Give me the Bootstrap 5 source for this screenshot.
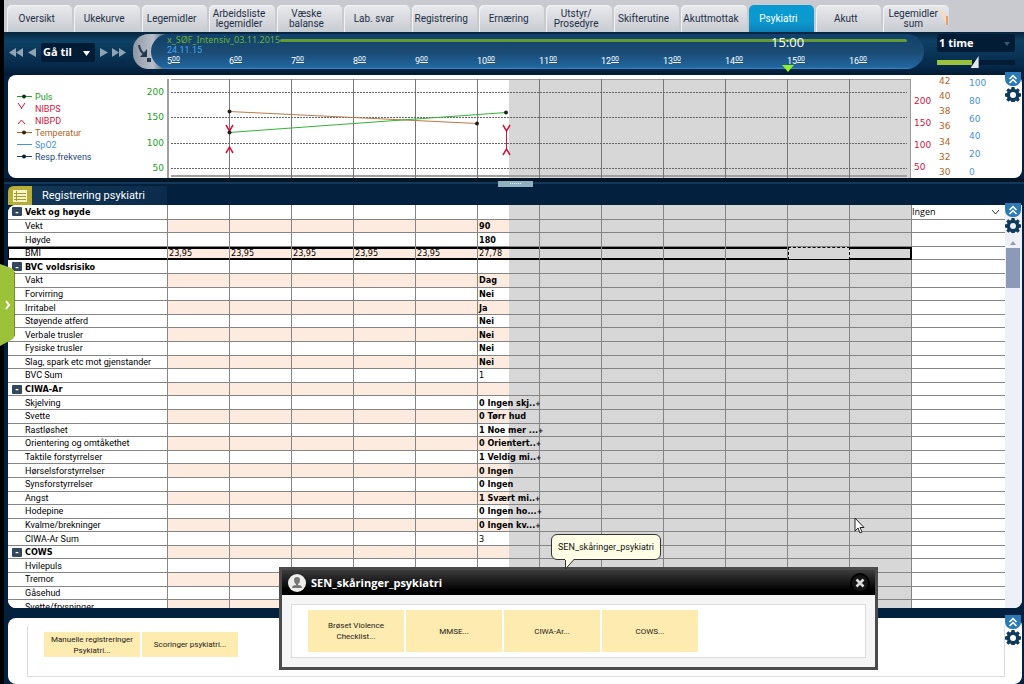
<!DOCTYPE html>
<html lang="no">
<head>
<meta charset="utf-8">
<meta name="viewport" content="width=device-width, initial-scale=1">
<title>Registrering psykiatri</title>
<link href="https://cdn.jsdelivr.net/npm/bootstrap@5.3.0/dist/css/bootstrap.min.css" rel="stylesheet">
<style>
:root{--ui:Roboto,"Open Sans",sans-serif;--head:"Open Sans",sans-serif;--data:"DejaVu Sans Condensed","DejaVu Sans",sans-serif;--line:#858585;--later:#d7d7d7;--peach:#feebdf}
body{font-family:var(--ui);font-size:9px;line-height:12px;color:#111;background:#03213f}
button,select{font-family:inherit}
.app{border-left:4px solid #000;min-height:570px;overflow:hidden}
.tabs{background:#c8cad0;height:32px;padding:5px 73px 0 3px}
.tabs .nav-link{flex:1 1 0;min-width:0;margin-right:2px;padding:0 7px 0 1px;border:0;border-radius:5px 5px 0 0;font:10px/10px var(--ui);color:#1d3047;background:linear-gradient(#e9eaed,#d5d7dc 60%,#c6ccd2);box-shadow:inset 1px 1px #f1f2f4;white-space:nowrap}
.tabs .nav-link.active{color:#fff;background:linear-gradient(#079ad0,#0c9ad0 60%,#0d7fb8);box-shadow:none}
.tabs .nav-link:last-child{position:relative;isolation:isolate}
.corner{position:absolute;right:0;top:2px;z-index:-1}
.toolbar-row{height:43px;background:linear-gradient(#07243c,#0d4163 20%,#06294a 80%,#021a33)}
.nav-tools{width:129px;padding-left:5px;padding-bottom:3px;gap:4px}
.arrow-btn{border:0;background:none;padding:0;line-height:0}
.dark-select{appearance:none;display:block;border:0;border-radius:2px;color:#fff;background:#031c36;font:700 11px/14px var(--head);padding:0 2px}
.dark-select.goto{width:54px;height:19px}
.pick{position:relative}
.pick svg{position:absolute;right:5px;top:8px;pointer-events:none}
.capsule{margin-top:2px;height:39px;position:relative}
.cap-body{height:35px;border-radius:16px 18px 18px 16px;background:linear-gradient(90deg,#8d97a5,#b9c0ca 20px,#0000 40px)}
.timeline{height:35px;margin-left:18px;padding-left:16px;padding-right:13px;border-radius:18px;background:linear-gradient(#11406a,#1b4a72 50%,#2166a0 95%,#3f8cc8);color:#fff}
.cap-icon{position:absolute;left:4px;top:11px}
.plan{color:#6ab42e;font:9px/12px "Noto Sans",sans-serif}
.plan-bar{height:3px;background:#649b33;border-radius:2px;margin-right:4px}
.date{color:#3fa4f4;line-height:9px}
.hours>span{flex:1 1 0;line-height:12px;white-space:nowrap}
.hours sup{font-size:7px;top:-3px;text-decoration:underline;line-height:0}
.clock{position:absolute;left:638px;top:0;font:13px/16px var(--head);color:#fff}
.clock-mark{position:absolute;left:649px;top:31px}
.zoombox{width:100px;padding:2px 9px 0 13px}
.zoombox .dark-select{width:100%;height:18px}
.zoombox input{appearance:none;display:block;width:100%;height:12px;margin:4px 0 0;background:linear-gradient(90deg,#9ac23c 45%,#031c36 45%) center/100% 5px no-repeat;border-radius:3px}
.zoombox input::-webkit-slider-thumb{appearance:none;width:8px;height:12px;background:#e3e8ee;clip-path:polygon(100% 0,100% 100%,0 100%)}
.panel{background:#fff;margin-left:4px;margin-right:2px;position:relative}
.chart{height:103px;border-radius:8px}
.side-tools{position:absolute;right:1px;top:-3px;width:16px;z-index:2}
.sheet-wrap .side-tools{right:3px;top:-2px}
.side-tools button{border:0;padding:0;background:none;display:block;line-height:0}
.side-tools .fold{background:#2b79b5;width:16px;height:14px;border-radius:0 0 7px 7px}
.left-col{width:159px;flex:none}
.legend-list{padding:16px 0 0 9px}
.legend-list svg{margin-right:3px;flex:none}
.axis{font-family:"DejaVu Sans",sans-serif}
.axis.green{padding:11px 3px 4px 0;color:#23a023;text-align:right}
.axis.red{padding:20px 0 5px 3px;width:28px;color:#d4143c}
.axis.brown{width:30px;color:#b4641e}
.axis.blue{color:#4a90e2;padding-top:2px}
.split{height:8px;background:linear-gradient(#041527 4px,#14385a 4px,#14385a 6px,#03213f 6px)}
.grip{width:35px;height:6px;background:#8fb0bf;margin-left:494px;margin-top:3px;line-height:0}
.titlebar{height:19px;width:159px;background:linear-gradient(90deg,#16395a,#0a2b4b);border-radius:6px 3px 0 0;margin-left:4px}
.titlebar h1{font:11px/18px var(--ui);color:#fff;margin:1px 0 0 10px}
.titlebar svg{flex:none}
.sheet{flex:1 1 0;min-height:0;border-radius:8px 0 8px 8px;overflow:hidden}
.sheet-wrap{position:relative;min-height:0}
.grid-table{border-collapse:separate;border-spacing:0;table-layout:fixed;width:100%;height:calc(100% + 6px);font:9px/12px var(--data);color:#000}
.grid-table td,.grid-table th{padding:0 0 0 1px;height:13px;border:0 solid var(--line);border-width:0 1px 1px 0;white-space:nowrap;font-weight:400;background:var(--stripe)}
.grid-table th{background:#fff;padding-left:17px;font-family:var(--ui)}
.grid-table th.group{font-weight:700;padding-left:4px;font-family:var(--data)}
.grid-table tr{--stripe:#fff}
.grid-table tr:nth-child(even){--stripe:var(--peach)}
.grid-table td.now{background:linear-gradient(90deg,var(--stripe) 51%,var(--later) 51%)}
.grid-table td.later{background:var(--later)}
.grid-table td.extra{background:#fff;border-right:0;padding:0}
.grid-table td.strong{font-weight:700}
.more{font-size:7px;line-height:0}
.grid-table .chosen>*:not(.extra){box-shadow:inset 0 2px #000,inset 0 -1px #000;border-bottom-color:#000}
.grid-table .chosen>th:not(.extra){box-shadow:inset 1px 2px #000,inset 0 -1px #000}
.grid-table .chosen>td.end{box-shadow:inset 0 2px #000,inset -1px -1px #000;border-right-color:#000}
.grid-table .chosen>td.focus-cell{box-shadow:none;border-right:0;outline:1px dashed #000;outline-offset:-1px}
.minus{width:10px;height:9px;border:0;padding:0;margin-right:3px;border-radius:1px;background:#33475c;color:#fff;font:700 9px/8px var(--data);vertical-align:0}
.extra select{appearance:none;border:0;padding:0;width:100%;height:13px;font:9px/12px "Open Sans",sans-serif;display:block;background:#fff}
.extra .pick svg{top:4px}
.scroll{width:17px;flex:none;background:#eef0f7;padding:34px 2px 0 1px}
.scroll div{height:40px;background:#8c99b8}
.drawer{position:absolute;left:0;top:264px;z-index:3;border:0;padding:0;background:none;line-height:0}
.lower{height:66px;margin-top:10px;border-radius:8px;padding:8px 17px 8px 19px}
.tray{gap:2px;border:1px solid #dcdcdc}
.lower>.tray{border-top:0;height:51px;padding:6px 16px}
.note{width:96px;border:0;background:#feebb0;color:#1b1b1b;font-size:8px;line-height:11px;padding:0}
.lower .note{height:25px}
.dialog-box{position:absolute;left:279px;right:146px;bottom:14px;z-index:5;border:3px solid #4b4b4b;background:#f5f5f5}
.dialog-box header{height:25px;padding:0 5px;background:linear-gradient(#3c3c3c,#000 80%);color:#fff}
.dialog-box h2{font:700 11px/24px var(--head);margin:0 auto 0 4px}
.dialog-box header button{border:0;padding:0;background:none;line-height:0}
.dialog-box .tray{margin:9px;background:#fff;padding:5px 16px;height:54px}
.dialog-box .note{height:42px}
.tip{position:absolute;left:551px;bottom:124px;z-index:6;width:110px;height:26px;border:1px solid #333;border-radius:6px;background:#ffffe6;line-height:24px;text-align:center}
.tip svg{position:absolute;left:12px;top:24px}
.pointer{position:absolute;left:854px;top:517px;z-index:6}
</style>
</head>
<body>
<svg width="0" height="0" class="position-absolute" aria-hidden="true">
<symbol id="gear" viewBox="0 0 16 16"><path fill="#103a5c" fill-rule="evenodd" d="M6.500 1h3l.4 2 1.200.500 1.700-1.200 2 2-1.200 1.700.500 1.100 2 .4v3l-2 .4-.5 1.200 1.200 1.700-2 2-1.700-1.200-1.200.500-.4 2h-3l-.4-2-1.100-.5-1.700 1.200-2-2 1.200-1.700L2 10.900l-2-.4v-3l2-.4.5-1.100-1.200-1.700 2-2L5 3.500 6.100 3zM8 6a3 3 0 1 0 0 6 3 3 0 0 0 0-6z"/></symbol>
<symbol id="fold" viewBox="0 0 16 14"><path fill="none" stroke="#fff" stroke-width="1.600" d="M4.500 7 8 3.700 11.500 7M4.500 11 8 7.700l3.500 3.300"/></symbol>
</svg>
<div class="app d-flex flex-column vh-100">
<nav class="tabs nav d-flex flex-nowrap" role="tablist" id="tabs"></nav>

<div class="toolbar-row d-flex">
  <div class="nav-tools d-flex align-items-center">
    <button class="arrow-btn" aria-label="Spol tilbake"><svg width="14" height="9"><path fill="#8fa3b5" d="M7 0v9L0 4.500zM14 0v9L7 4.500z"/></svg></button>
    <button class="arrow-btn" aria-label="Tilbake"><svg width="10" height="9"><path fill="#8fa3b5" d="M9 0v9L1 4.500z"/></svg></button>
    <div class="pick"><select class="dark-select goto" aria-label="Gå til"><option>Gå til</option></select><svg width="7" height="5"><path fill="#fff" d="M0 0h7L3.500 5z"/></svg></div>
    <button class="arrow-btn" aria-label="Frem"><svg width="9" height="9"><path fill="#8fa3b5" d="M1 0v9l8-4.500z"/></svg></button>
    <button class="arrow-btn" aria-label="Spol frem"><svg width="14" height="9"><path fill="#8fa3b5" d="M0 0v9l7-4.500zM7 0v9l7-4.500z"/></svg></button>
  </div>
  <div class="capsule flex-fill">
    <div class="cap-body d-flex"><div class="timeline flex-fill">
      <div class="plan d-flex align-items-center"><span>x_SØF_Intensiv_03.11.2015</span><span class="plan-bar flex-fill"></span></div>
      <div class="date">24.11.15</div>
      <div class="hours d-flex" id="hours"></div>
    </div></div>
    <svg class="cap-icon" width="16" height="17"><path fill="none" stroke="#26394c" stroke-width="2" d="M2 0q1 6 5 9"/><path fill="#26394c" d="M10 4v8H3zM10 13h4v4h-4z"/></svg>
    <span class="clock">15:00</span>
    <svg class="clock-mark" width="12" height="7"><path fill="#8df02c" d="M0 0h12L6 7z"/></svg>
  </div>
  <div class="zoombox">
    <div class="pick"><select class="dark-select" aria-label="Tidsintervall"><option>1 time</option></select><svg width="6" height="4"><path fill="#3d5874" d="M0 0h6L3 4z"/></svg></div>
    <input type="range" min="0" max="100" value="48" aria-label="Skala">
  </div>
</div>

<section class="panel chart d-flex">
  <div class="left-col d-flex justify-content-between">
    <div class="legend-list">
      <div class="d-flex" style="color:#23a023"><svg width="15" height="12"><path stroke="currentColor" d="M0 5.500h15"/><circle cx="7" cy="5.500" r="2" fill="#13301a"/></svg>Puls</div>
      <div class="d-flex" style="color:#d4143c"><svg width="15" height="12"><path stroke="currentColor" fill="none" d="M1 0l3.500 5L8 0M4.500 5v1"/></svg>NIBPS</div>
      <div class="d-flex" style="color:#d4143c"><svg width="15" height="12"><path stroke="currentColor" fill="none" d="M1 9l3.500-4L8 9"/></svg>NIBPD</div>
      <div class="d-flex" style="color:#b4641e"><svg width="15" height="12"><path stroke="currentColor" d="M0 5.500h15"/><circle cx="7" cy="5.500" r="2" fill="#3a200a"/></svg>Temperatur</div>
      <div class="d-flex" style="color:#4a90e2"><svg width="15" height="12"><path stroke="currentColor" d="M0 5.500h15"/></svg>SpO2</div>
      <div class="d-flex" style="color:#1e4678"><svg width="15" height="12"><path stroke="currentColor" d="M0 5.500h15"/><circle cx="7" cy="5.500" r="2" fill="#0a1e38"/></svg>Resp.frekvens</div>
    </div>
    <div class="axis green d-flex flex-column justify-content-between"><span>200</span><span>150</span><span>100</span><span>50</span></div>
  </div>
  <svg class="flex-fill" style="min-width:0" height="103" viewBox="0 0 744 103" preserveAspectRatio="none" id="plot"></svg>
  <div class="d-flex flex-none" style="width:111px">
    <div class="axis red d-flex flex-column justify-content-between"><span>200</span><span>150</span><span>100</span><span>50</span></div>
    <div class="axis brown d-flex flex-column justify-content-between"><span>42</span><span>40</span><span>38</span><span>36</span><span>34</span><span>32</span><span>30</span></div>
    <div class="axis blue d-flex flex-column justify-content-between"><span>100</span><span>80</span><span>60</span><span>40</span><span>20</span><span>0</span></div>
  </div>
  <div class="side-tools"><button class="fold" aria-label="Skjul kurve"><svg width="16" height="14"><use href="#fold"/></svg></button><button aria-label="Innstillinger"><svg width="16" height="16"><use href="#gear"/></svg></button></div>
</section>

<div class="split d-flex"><div class="grip"><svg width="35" height="6"><path stroke="#e4f0f4" stroke-dasharray="1 1" d="M12 2.500h11"/></svg></div></div>
<div class="titlebar d-flex">
  <svg width="24" height="19"><path fill="#b7ae35" d="M0 19V6q0-6 6-6h18v19z"/><path fill="#f7f4cc" d="M5 4h14v12H5z"/><path stroke="#a39a2c" d="M6 7.500h12M6 10.500h12M6 13.500h12M8.500 5v10"/></svg>
  <h1>Registrering psykiatri</h1>
</div>

<div class="sheet-wrap flex-fill d-flex">
<section class="panel sheet d-flex">
  <div class="flex-fill h-100">
    <table class="grid-table">
      <colgroup id="cols"></colgroup>
      <tbody id="rows"></tbody>
    </table>
  </div>
  <div class="scroll"><svg width="6" height="9" class="d-block mx-auto"><path fill="#9a9da8" d="M3 2l3 4H0z"/></svg><div></div></div>
</section>
<div class="side-tools"><button class="fold" aria-label="Skjul skjema"><svg width="16" height="14"><use href="#fold"/></svg></button><button aria-label="Innstillinger for skjema"><svg width="16" height="16"><use href="#gear"/></svg></button></div>
</div>

<section class="panel lower">
  <div class="tray d-flex"><button class="note">Manuelle registreringer Psykiatri...</button><button class="note">Scoringer psykiatri...</button></div>
  <div class="side-tools"><button class="fold" aria-label="Skjul snarveier"><svg width="16" height="14"><use href="#fold"/></svg></button><button aria-label="Innstillinger for snarveier"><svg width="16" height="16"><use href="#gear"/></svg></button></div>
</section>
</div>

<button class="drawer" aria-label="Åpne sidepanel"><svg width="18" height="84"><path fill="#9cc23a" d="M0 0l11 4q4 2 4 6v60q0 4-4 6L0 82z"/><path fill="none" stroke="#6d9424" d="M14.500 8v64"/><path fill="none" stroke="#fff" stroke-width="2" d="M6 37l3 4-3 4"/></svg></button>

<div class="dialog-box" role="dialog" aria-labelledby="dlg-title">
  <header class="d-flex align-items-center">
    <svg width="20" height="20"><circle cx="10" cy="10" r="9" fill="#eeeeea"/><path fill="#777" d="M7 7q0-3 3-3t3 3-2 4v1q4 0 4 3H5q0-3 4-3v-1Q7 10 7 7z"/></svg>
    <h2 id="dlg-title">SEN_skåringer_psykiatri</h2>
    <button aria-label="Lukk"><svg width="20" height="20"><circle cx="10" cy="10" r="9" fill="#151515" stroke="#000" stroke-width="2"/><path stroke="#ddd" stroke-width="2.500" d="M6.500 6.500l7 7m0-7l-7 7"/></svg></button>
  </header>
  <div class="tray d-flex"><button class="note">Brøset Violence<br>Checklist...</button><button class="note">MMSE...</button><button class="note">CIWA-Ar...</button><button class="note">COWS...</button></div>
</div>
<div class="tip" role="tooltip">SEN_skåringer_psykiatri<svg width="14" height="11"><path fill="#ffffe6" d="M1 0v10L10 0z"/><path fill="none" stroke="#333" d="M1.500 1v9L10 .500"/></svg></div>
<svg class="pointer" width="12" height="18"><path fill="#fff" stroke="#222" d="M1 1v13l3-3 2 5 2-1-2-4.500h4z"/></svg>

<script src="https://cdn.jsdelivr.net/npm/bootstrap@5.3.0/dist/js/bootstrap.bundle.min.js"></script>
<script>
const byId = id => document.getElementById(id);

const tabs = ['Oversikt','Ukekurve','Legemidler','Arbeidsliste<br>legemidler','Væske<br>balanse','Lab. svar','Registrering','Ernæring','Utstyr/<br>Prosedyre','Skifterutine','Akuttmottak','Psykiatri','Akutt','Legemidler<br>sum'];
byId('tabs').innerHTML = tabs.map((t, i) => {
  const on = t === 'Psykiatri';
  const corner = i === tabs.length - 1 ? '<svg class="corner" width="22" height="20"><path fill="#f5d9c2" d="M2 0q12 2 17 18l1-9q-6-7-18-9z"/><path fill="#e0a070" d="M19 9h2v9h-2z"/></svg>' : '';
  return `<button class="nav-link${on ? ' active' : ''}" role="tab" aria-selected="${on}">${t}${corner}</button>`;
}).join('');

byId('hours').innerHTML = [5,6,7,8,9,10,11,12,13,14,15,16].map(h => `<span>${h}<sup>00</sup></span>`).join('');

// Curve area: 62 units per hour, shaded after the present time
const verticals = Array.from({length: 11}, (_, i) => `M${(i + 1) * 62 + .5} 4v99`).join('');
const dashes = [17, 42, 68, 93].map(y => `M4 ${y + .5}h736`).join('');
byId('plot').innerHTML = `
  <path fill="#d7d7d7" d="M342 4h401v99H342z"/>
  <path stroke="#a0a0a0" stroke-width="2" d="M1 4v99M4 101h736"/>
  <path stroke="#999" d="M4 4.500h739M743.500 4v99"/>
  <path stroke="#777" d="${verticals}"/>
  <path stroke="#666" stroke-dasharray="2 1" d="${dashes}"/>
  <path stroke="#c07848" d="M62 36.500 310 48.500"/>
  <path stroke="#34b334" d="M62 57.500 339 37.500"/>
  <g stroke="#d4143c" fill="none"><path d="M339.500 56v18"/><path stroke-width="1.500" d="M59 50l3.500 6 3.500-6M59 78l3.500-6 3.500 6M336 50l3.500 6 3.500-6M336 80l3.500-6 3.500 6"/></g>
  <g fill="#222"><circle cx="62.500" cy="36.500" r="2"/><circle cx="62.500" cy="57.500" r="2"/><circle cx="310" cy="48.500" r="2"/><circle cx="339" cy="37.500" r="2"/></g>`;

byId('cols').innerHTML = '<col style="width:160px">' + '<col>'.repeat(12) + '<col style="width:93px">';

// [label, value at 10:00, kind]   g = group heading, n = plain value, + = shortened text
const rows = [
  ['Vekt og høyde','','g'],['Vekt','90'],['Høyde','180'],['BMI','27,78','n'],
  ['BVC voldsrisiko','','g'],['Vakt','Dag'],['Forvirring','Nei'],['Irritabel','Ja'],['Støyende atferd','Nei'],['Verbale trusler','Nei'],['Fysiske trusler','Nei'],['Slag, spark etc mot gjenstander','Nei'],['BVC Sum','1','n'],
  ['CIWA-Ar','','g'],['Skjelving','0 Ingen skj..','+'],['Svette','0 Tørr hud'],['Rastløshet','1 Noe mer ...','+'],['Orientering og omtåkethet','0 Orientert..','+'],['Taktile forstyrrelser','1 Veldig mi..','+'],['Hørselsforstyrrelser','0 Ingen'],['Synsforstyrrelser','0 Ingen'],['Angst','1 Svært mi..','+'],['Hodepine','0 Ingen ho...','+'],['Kvalme/brekninger','0 Ingen kv...','+'],['CIWA-Ar Sum','3','n'],
  ['COWS','','g'],['Hvilepuls',''],['Tremor',''],['Gåsehud',''],['Svette/frysninger','']
];
byId('rows').innerHTML = rows.map(([label, value, kind], r) => {
  const bmi = label === 'BMI';
  let html = kind === 'g'
    ? `<th class="group" scope="row"><button class="minus" aria-label="Skjul ${label}">-</button>${label}</th>`
    : `<th scope="row">${label}</th>`;
  for (let c = 0; c < 12; c++) {
    if (c < 5) html += `<td>${bmi ? '23,95' : ''}</td>`;
    else if (c === 5) html += `<td class="now${kind === 'n' ? '' : ' strong'}">${value}${kind === '+' ? '<span class="more">+</span>' : ''}</td>`;
    else html += `<td class="later${bmi && c === 10 ? ' focus-cell' : ''}${c === 11 ? ' end' : ''}"></td>`;
  }
  html += `<td class="extra">${r ? '' : '<div class="pick"><select aria-label="Filter"><option>Ingen</option></select><svg width="9" height="6"><path fill="none" stroke="#333" d="M1 1l3.500 4L8 1"/></svg></div>'}</td>`;
  return `<tr${bmi ? ' class="chosen"' : ''}>${html}</tr>`;
}).join('');
</script>
</body>
</html>
